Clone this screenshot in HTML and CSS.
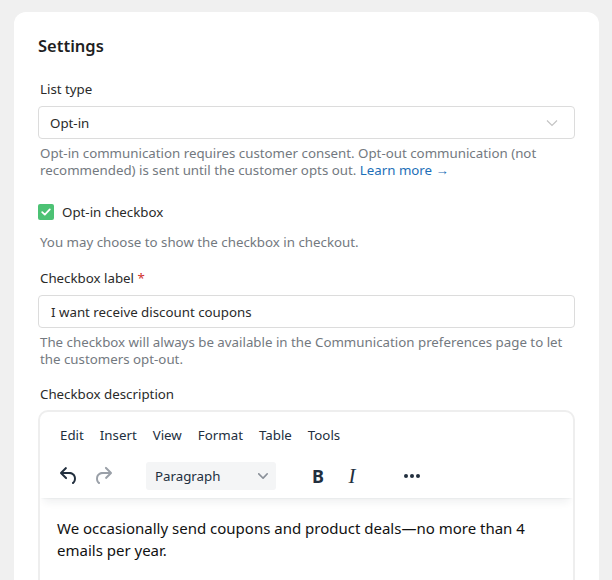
FILE: index.html
```html
<!DOCTYPE html>
<html>
<head>
<meta charset="utf-8">
<link rel="stylesheet" href="styles.css">
</head>
<body>
<div class="card">
  <h2 class="title">Settings</h2>

  <div class="field">
    <div class="label">List type</div>
    <div class="select">
      <span>Opt-in</span>
      <svg class="chev" width="12" height="8" viewBox="0 0 12 8"><polyline points="1,1.5 6,6.5 11,1.5" fill="none" stroke="#c4c4c4" stroke-width="1.2"/></svg>
    </div>
    <p class="help">Opt-in communication requires customer consent. Opt-out communication (not recommended) is sent until the customer opts out. <a class="link">Learn more →</a></p>
  </div>

  <div class="check-row">
    <span class="checkbox"><svg width="12" height="12" viewBox="0 0 12 12"><polyline points="2.2,6.2 4.8,8.6 9.8,3.4" fill="none" stroke="#fff" stroke-width="1.8" stroke-linecap="round" stroke-linejoin="round"/></svg></span>
    <span class="check-label">Opt-in checkbox</span>
  </div>
  <p class="help help-check">You may choose to show the checkbox in checkout.</p>

  <div class="field field-label">
    <div class="label">Checkbox label <span class="req">*</span></div>
    <div class="input">I want receive discount coupons</div>
    <p class="help">The checkbox will always be available in the Communication preferences page to let the customers opt-out.</p>
  </div>

  <div class="field field-desc">
    <div class="label">Checkbox description</div>
    <div class="editor">
      <div class="editor-header">
        <div class="menubar">
          <span>Edit</span><span>Insert</span><span>View</span><span>Format</span><span>Table</span><span>Tools</span>
        </div>
        <div class="toolbar">
          <span class="tbtn">
            <svg width="24" height="24" viewBox="0 0 24 24"><path fill="#222f3e" d="M6.4 8H12c3.7 0 6.2 2 6.8 5.1.6 2.7-.4 5.6-2.3 6.8a1 1 0 0 1-1-1.8c1.1-.6 1.8-2.7 1.4-4.6-.5-2.1-2.1-3.5-4.9-3.5H6.4l3.3 3.3a1 1 0 1 1-1.4 1.4l-5-5a1 1 0 0 1 0-1.4l5-5a1 1 0 0 1 1.4 1.4L6.4 8Z"/></svg>
          </span>
          <span class="tbtn">
            <svg width="24" height="24" viewBox="0 0 24 24"><path fill="#9aa0a8" d="M17.6 10H12c-2.8 0-4.4 1.4-4.9 3.5-.4 2 .3 4 1.4 4.6a1 1 0 1 1-1 1.8c-2-1.2-2.9-4.1-2.3-6.8.6-3 3-5.1 6.8-5.1h5.6l-3.3-3.3a1 1 0 1 1 1.4-1.4l5 5a1 1 0 0 1 0 1.4l-5 5a1 1 0 0 1-1.4-1.4l3.3-3.3Z"/></svg>
          </span>
          <span class="blocks">
            <span>Paragraph</span>
            <svg width="10" height="10" viewBox="0 0 10 10"><path fill="#8a9099" d="M8.7 2.2c.3-.3.8-.3 1 0 .4.4.4.9 0 1.2L5.7 7.8c-.3.3-.9.3-1.2 0L.2 3.4a.8.8 0 0 1 0-1.2c.3-.3.8-.3 1.1 0L5 6l3.7-3.8Z"/></svg>
          </span>
          <span class="tbtn bold">B</span>
          <span class="tbtn italic">I</span>
          <span class="tbtn more">
            <svg width="24" height="24" viewBox="0 0 24 24"><circle cx="6" cy="12" r="2" fill="#222f3e"/><circle cx="12" cy="12" r="2" fill="#222f3e"/><circle cx="18" cy="12" r="2" fill="#222f3e"/></svg>
          </span>
        </div>
      </div>
      <div class="content">We occasionally send coupons and product deals—no more than 4 emails per year.</div>
    </div>
  </div>
</div>
</body>
</html>
```

FILE: styles.css
```css
html, body {
  margin: 0;
  padding: 0;
}
body {
  background: #f0f0f0;
  font-family: "Noto Sans", "Open Sans", sans-serif;
  color: #222;
  padding: 12px 13px 0 14px;
  height: 580px;
  box-sizing: border-box;
  overflow: hidden;
}
.card {
  background: #fff;
  border-radius: 12px;
  padding: 22px 24px 40px 24px;
}
.title {
  margin: 0;
  font-size: 16.5px;
  line-height: 24px;
  font-weight: 600;
  color: #1f1f1f;
}
.field {
  margin-top: 21px;
}
.label {
  font-size: 13.3px;
  line-height: 20px;
  color: #2a2a2a;
  padding-left: 2px;
  margin-bottom: 7px;
}
.req {
  color: #d0312d;
}
.select, .input {
  height: 33px;
  box-sizing: border-box;
  border: 1px solid #dcdcdc;
  border-radius: 4px;
  display: flex;
  align-items: center;
  justify-content: space-between;
  padding: 0 14px 0 11px;
  font-size: 13.3px;
  color: #2a2a2a;
}
.input {
  padding-left: 12px;
}
.chev {
  margin-right: 2px;
}
.help {
  margin: 6px 0 0 0;
  padding-left: 2px;
  font-size: 13.3px;
  line-height: 17px;
  color: #737980;
}
.link {
  display: inline-block;
  line-height: 17px;
  color: #1d6fb8;
  text-decoration: none;
}
.check-row {
  margin-top: 23px;
  display: flex;
  align-items: center;
  gap: 8px;
  height: 20px;
}
.checkbox {
  width: 16px;
  height: 16px;
  border-radius: 2px;
  background: #4cc274;
  display: flex;
  align-items: center;
  justify-content: center;
}
.check-label {
  font-size: 13.3px;
  color: #2a2a2a;
}
.help-check {
  margin-top: 12px;
}
.field-label {
  margin-top: 17px;
}
.field-desc {
  margin-top: 16px;
}
.field-desc .label {
  margin-bottom: 6px;
}
.editor {
  border: 2px solid #eeeeee;
  border-radius: 10px;
  height: 200px;
  overflow: hidden;
}
.editor-header {
  box-shadow: 0 2px 2px -2px rgba(34,47,62,.1), 0 8px 8px -4px rgba(34,47,62,.07);
  padding: 0 0 8px 0;
  position: relative;
}
.menubar {
  display: flex;
  gap: 16px;
  padding: 12px 0 0 20px;
  font-size: 13.3px;
  line-height: 22px;
  color: #222f3e;
}
.toolbar {
  display: flex;
  align-items: center;
  padding: 16px 0 0 12px;
  height: 28px;
}
.tbtn {
  width: 34px;
  height: 28px;
  display: flex;
  align-items: center;
  justify-content: center;
  color: #222f3e;
}
.blocks {
  margin-left: 26px;
  width: 130px;
  height: 28px;
  box-sizing: border-box;
  background: #f4f5f6;
  border-radius: 3px;
  display: flex;
  align-items: center;
  justify-content: space-between;
  padding: 0 8px 0 9px;
  font-size: 13.3px;
  color: #222f3e;
}
.bold {
  margin-left: 25px;
  font-family: "Noto Sans", sans-serif;
  font-weight: 700;
  font-size: 18px;
}
.italic {
  font-family: "Liberation Serif", "DejaVu Serif", serif;
  font-style: italic;
  font-size: 21px;
}
.tbtn.more {
  margin-left: 26px;
}
.content {
  padding: 19px 19px 0 17px;
  font-size: 15px;
  line-height: 22px;
  color: #111;
}
```
